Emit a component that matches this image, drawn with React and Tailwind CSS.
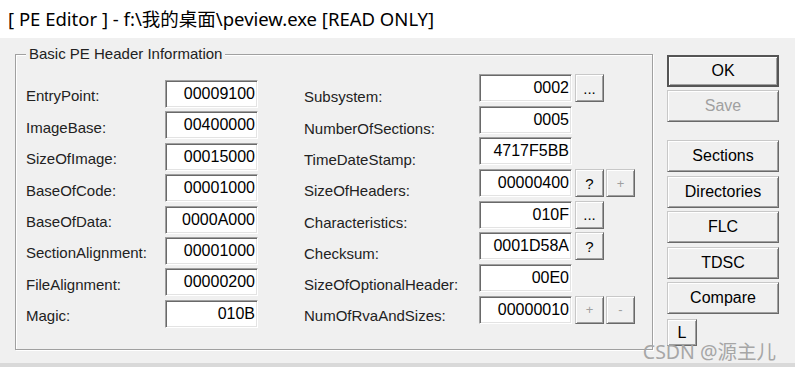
import React from "react";

const F = { fontFamily: '"Liberation Sans", Arial, sans-serif' };

function Field({ value }) {
  return (
    <div className="w-[93px] h-[28px] bg-white border border-t-[#a0a0a0] border-l-[#a0a0a0] border-b-white border-r-white shadow-[inset_1px_1px_0_#696969,inset_-1px_-1px_0_#e3e3e3] flex items-center justify-end pr-[2px] text-[16px] text-black leading-none">
      {value}
    </div>
  );
}

function SmallBtn({ label, disabled }) {
  return (
    <div
      className={
        "w-[29px] h-[28px] bg-[#f0f0f0] border border-t-[#c8c8c8] border-l-[#c8c8c8] border-b-[#696969] border-r-[#696969] shadow-[inset_1px_1px_0_#ffffff,inset_-1px_-1px_0_#a0a0a0] flex items-center justify-center leading-none " +
        (disabled ? "text-[#a0a0a0] text-[13px]" : "text-black text-[15px]")
      }
    >
      {label}
    </div>
  );
}

function Btn({ label, disabled, isDefault, h = "h-[32px]" }) {
  return (
    <div
      className={
        "w-[112px] " +
        h +
        " bg-[#f0f0f0] flex items-center justify-center text-[16px] leading-none " +
        (isDefault
          ? "border-2 border-[#555555] shadow-[inset_1px_1px_0_#ffffff,inset_-1px_-1px_0_#a0a0a0]"
          : "border border-t-[#c8c8c8] border-l-[#c8c8c8] border-b-[#696969] border-r-[#696969] shadow-[inset_1px_1px_0_#ffffff,inset_-1px_-1px_0_#a0a0a0]") +
        (disabled ? " text-[#a0a0a0]" : " text-black")
      }
    >
      {label}
    </div>
  );
}

const labels1 = [
  "EntryPoint:",
  "ImageBase:",
  "SizeOfImage:",
  "BaseOfCode:",
  "BaseOfData:",
  "SectionAlignment:",
  "FileAlignment:",
  "Magic:",
];
const values1 = [
  "00009100",
  "00400000",
  "00015000",
  "00001000",
  "0000A000",
  "00001000",
  "00000200",
  "010B",
];
const labels2 = [
  "Subsystem:",
  "NumberOfSections:",
  "TimeDateStamp:",
  "SizeOfHeaders:",
  "Characteristics:",
  "Checksum:",
  "SizeOfOptionalHeader:",
  "NumOfRvaAndSizes:",
];
const values2 = [
  { v: "0002", b: [{ l: "..." }] },
  { v: "0005", b: [] },
  { v: "4717F5BB", b: [] },
  { v: "00000400", b: [{ l: "?" }, { l: "+", d: true }] },
  { v: "010F", b: [{ l: "..." }] },
  { v: "0001D58A", b: [{ l: "?" }] },
  { v: "00E0", b: [] },
  { v: "00000010", b: [{ l: "+", d: true }, { l: "-", d: true }] },
];

export default function App() {
  return (
    <div
      className="relative w-[795px] h-[367px] bg-[#f0f0f0] overflow-hidden flex flex-col text-[#111]"
      style={F}
    >
      <div
        className="h-[38px] bg-white flex items-center pl-[8px] text-[18.5px] text-black shrink-0"
        style={{ fontFamily: '"Noto Sans", "Noto Sans CJK SC", sans-serif' }}
      >
        [ PE Editor ] - f:\我的桌面\peview.exe [READ ONLY]
      </div>
      <div className="flex h-[325px] shrink-0">
        <div className="relative ml-[15px] mt-[16px] w-[638px] h-[296px] border border-[#a0a0a0] shadow-[1px_1px_0_#ffffff,inset_1px_1px_0_#ffffff] flex">
          <span className="absolute left-[10px] top-[-11px] px-[3px] bg-[#f0f0f0] text-[15px] leading-[20px] text-[#222]">
            Basic PE Header Information
          </span>
          <div className="ml-[10px] w-[139px] pt-[26px] flex flex-col">
            {labels1.map((l) => (
              <div key={l} className="h-[31.4px] flex items-center text-[15px] text-[#222]">
                {l}
              </div>
            ))}
          </div>
          <div className="w-[93px] pt-[25px] flex flex-col gap-[3.4px]">
            {values1.map((v, i) => (
              <Field key={i} value={v} />
            ))}
          </div>
          <div className="ml-[46px] w-[175px] pt-[27px] flex flex-col">
            {labels2.map((l) => (
              <div key={l} className="h-[31.3px] flex items-center text-[15px] text-[#222]">
                {l}
              </div>
            ))}
          </div>
          <div className="pt-[19px] flex flex-col gap-[3.7px]">
            {values2.map((r, i) => (
              <div key={i} className="flex gap-[2px]">
                <div className="mr-[1px]">
                  <Field value={r.v} />
                </div>
                {r.b.map((b, j) => (
                  <SmallBtn key={j} label={b.l} disabled={b.d} />
                ))}
              </div>
            ))}
          </div>
        </div>
        <div className="ml-[14px] pt-[17px] flex flex-col">
          <div className="flex flex-col gap-[3px]">
            <Btn label="OK" isDefault />
            <Btn label="Save" disabled />
          </div>
          <div className="mt-[18px] flex flex-col gap-[3.5px]">
            <Btn label="Sections" />
            <Btn label="Directories" />
            <Btn label="FLC" />
            <Btn label="TDSC" />
            <Btn label="Compare" />
          </div>
          <div className="mt-[5px] w-[30px] h-[27px] bg-[#f0f0f0] border border-t-[#c8c8c8] border-l-[#c8c8c8] border-b-[#696969] border-r-[#696969] shadow-[inset_1px_1px_0_#ffffff,inset_-1px_-1px_0_#a0a0a0] flex items-center justify-center text-[16px] leading-none text-black">
            L
          </div>
        </div>
      </div>
      <div className="flex-1 bg-[#d9d9d9]" />
      <div
        className="absolute right-[19px] bottom-[4px] text-[19.5px] leading-[22px] text-[#a6a6a6]"
        style={{ fontFamily: '"Noto Sans", "Noto Sans CJK SC", sans-serif' }}
      >
        CSDN @源主儿
      </div>
    </div>
  );
}
